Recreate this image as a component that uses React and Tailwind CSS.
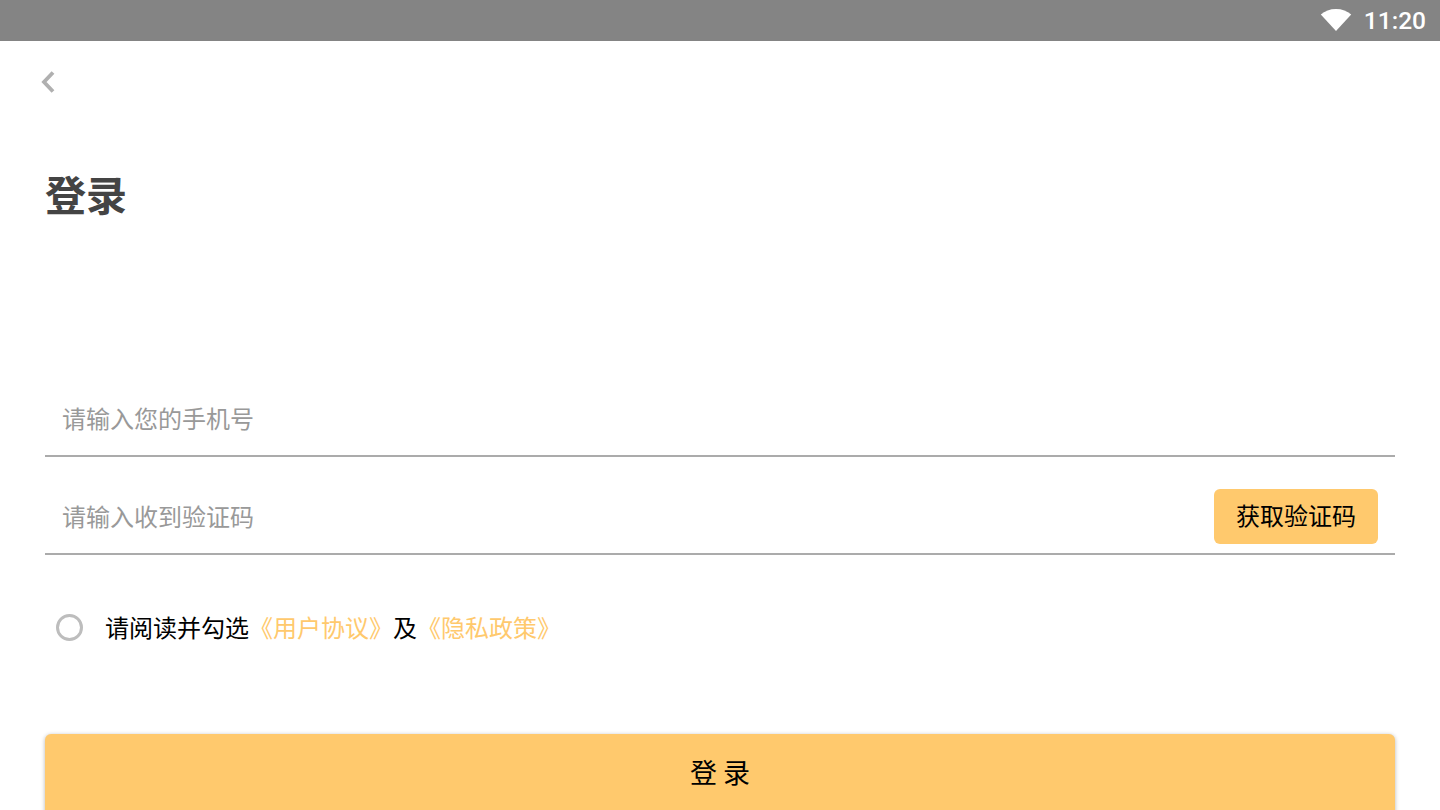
import React from 'react'

const cjk = "font-['Roboto','Noto_Sans_CJK_SC',sans-serif]"

const App = () => {
  return (
    <div className={`h-[810px] w-[1440px] overflow-hidden bg-white ${cjk}`}>
      {/* Status bar */}
      <div className="flex h-[41px] items-center justify-end bg-[#848484] pr-[14px]">
        <svg width="32" height="24" viewBox="0 0 32 24" className="mr-[12px] -mt-[1px]">
          <path d="M16 23 L0.8 6.6 C4.8 3 10 1 16 1 C22 1 27.2 3 31.2 6.6 Z" fill="#fff" />
        </svg>
        <span className="pt-[2px] text-[24.5px] font-medium leading-none text-white">11:20</span>
      </div>

      <div className="px-[45px]">
        {/* Back */}
        <div className="flex h-[82px] items-center">
          <svg width="16" height="24" viewBox="0 0 16 24" className="-ml-[5px]">
            <path d="M13 2.5 L4 12 L13 21.5" fill="none" stroke="#b0b0b0" strokeWidth="3.8" />
          </svg>
        </div>

        <h1 className="mt-[27px] h-[209px] text-[41px] font-bold leading-[94px] text-[#444444]">登录</h1>

        {/* Phone */}
        <div className="flex h-[98px] items-center border-b-2 border-[#ababab] pb-[2px] pl-[18px] pt-[28px]">
          <span className="-ml-px text-[24px] leading-none text-[#999999]">请输入您的手机号</span>
        </div>

        {/* Code */}
        <div className="flex h-[98px] items-center justify-between border-b-2 border-[#ababab] pb-[2px] pl-[18px] pr-[17px] pt-[28px]">
          <span className="-ml-px text-[24px] leading-none text-[#999999]">请输入收到验证码</span>
          <button className="mb-[4px] flex h-[55px] w-[164px] items-center justify-center rounded-[6px] bg-[#ffc96d] pt-[2px] text-[24px] text-black">获取验证码</button>
        </div>

        {/* Agreement */}
        <div className="mt-[58px] flex items-center pl-[11px]">
          <div className="mb-[3px] h-[27px] w-[27px] rounded-full border-[3.5px] border-[#bdbdbd]" />
          <p className="ml-[22px] text-[24px] leading-[32px] text-black">
            请阅读并勾选<span className="text-[#ffc96d]">《用户协议》</span>及<span className="text-[#ffc96d]">《隐私政策》</span>
          </p>
        </div>

        {/* Submit */}
        <button className="mt-[89px] flex h-[90px] w-full items-center justify-center rounded-[6px] bg-[#ffc96d] pb-[10px] pl-[6px] text-[27px] tracking-[6px] text-black shadow-[0_1px_4px_rgba(0,0,0,0.3)]">登录</button>
      </div>
    </div>
  )
}

export default App
